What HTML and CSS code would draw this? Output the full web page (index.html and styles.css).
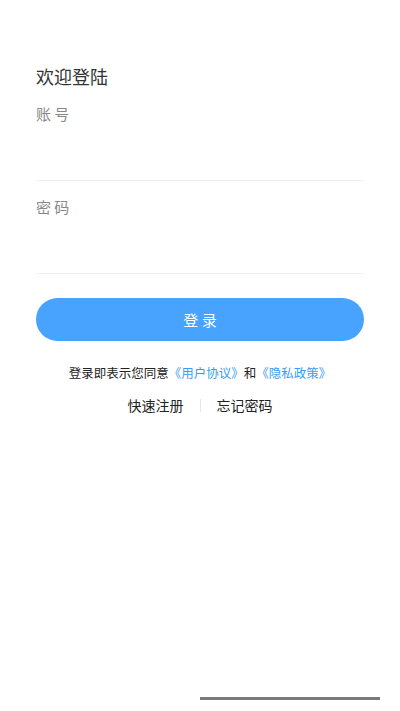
FILE: index.html
```html
<!DOCTYPE html>
<html lang="zh-CN">
<head>
    <meta charset="UTF-8">
    <meta name="viewport" content="width=device-width, initial-scale=1.0">
    <title>登录</title>
    <link rel="stylesheet" href="styles.css">
</head>
<body>
    <div class="login">
        <h2 class="title">欢迎登陆</h2>

        <div class="field">
            <label class="label">账 号</label>
            <input class="input" type="text">
        </div>

        <div class="field">
            <label class="label">密 码</label>
            <input class="input" type="password">
        </div>

        <button class="login-btn">登 录</button>

        <p class="agree">登录即表示您同意<a href="#">《用户协议》</a>和<a href="#">《隐私政策》</a></p>

        <div class="links">
            <a href="#">快速注册</a>
            <span class="sep"></span>
            <a href="#">忘记密码</a>
        </div>
    </div>

    <div class="home-bar"></div>
</body>
</html>
```
FILE: styles.css
```css
html, body {
    height: 100%;
    margin: 0;
}

body {
    background: #fff;
    font-family: "Noto Sans CJK SC", "Noto Sans", sans-serif;
    color: #333;
    display: flex;
    flex-direction: column;
}

.login {
    flex-grow: 1;
    padding: 62px 36px 0 36px;
}

.title {
    margin: 0;
    font-size: 18px;
    font-weight: normal;
    line-height: 28px;
    color: #333;
}

.field {
    display: flex;
    flex-direction: column;
    border-bottom: 1px solid #f0f0f0;
}

.field:first-of-type {
    margin-top: 3px;
}

.label {
    font-size: 15px;
    line-height: 22px;
    color: #888;
    margin-top: 10px;
}

.field + .field .label {
    margin-top: 15px;
}

.input {
    border: none;
    outline: none;
    height: 55px;
    padding: 0;
    font-size: 15px;
}

.login-btn {
    display: block;
    width: 100%;
    height: 43px;
    margin-top: 24px;
    border: none;
    border-radius: 22px;
    background-color: #47a3fd;
    color: #fff;
    font-family: inherit;
    font-size: 15px;
}

.agree {
    margin: 22px 0 0 0;
    text-align: center;
    font-size: 12.5px;
    line-height: 20px;
    color: #222;
}

.agree a {
    color: #3b9cf5;
    text-decoration: none;
}

.links {
    display: flex;
    justify-content: center;
    align-items: center;
    gap: 16px;
    margin-top: 12px;
    font-size: 14px;
    line-height: 20px;
}

.links a {
    color: #222;
    text-decoration: none;
}

.sep {
    width: 1px;
    height: 13px;
    background-color: #e6e6e6;
}

.home-bar {
    align-self: flex-end;
    width: 180px;
    height: 3px;
    margin: 0 20px 11px 0;
    background-color: #7a7a7a;
}
```
